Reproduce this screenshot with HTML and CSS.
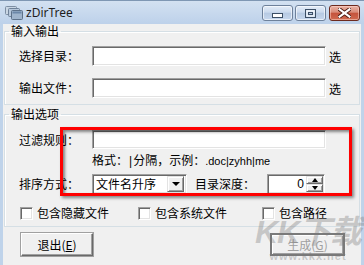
FILE: index.html
```html
<!DOCTYPE html>
<html>
<head>
<meta charset="utf-8">
<link rel="stylesheet" href="styles.css">
</head>
<body>
<div class="window">
  <div class="titlebar">
    <svg class="appicon" width="18" height="14" viewBox="0 0 18 14">
      <rect x="0.5" y="0.5" width="11" height="8" rx="1" fill="#c9d6e4" stroke="#7d8ea3"/>
      <rect x="3.5" y="2.5" width="11" height="8" rx="1" fill="#b7c8dc" stroke="#6f8299"/>
      <rect x="6.5" y="4.5" width="11" height="9" rx="1" fill="#9fb4cc" stroke="#5d7189"/>
      <rect x="7.5" y="5.5" width="9" height="2" fill="#6c87a8"/>
    </svg>
    <span class="title">zDirTree</span>
    <div class="controls">
      <div class="cbtn minb">
        <svg width="11" height="5" viewBox="0 0 11 5"><rect x="0.5" y="0.5" width="10" height="4" fill="#fff" stroke="#3c4f66"/></svg>
      </div>
      <div class="cbtn maxb">
        <svg width="11" height="9" viewBox="0 0 11 9"><rect x="0.5" y="0.5" width="10" height="8" fill="none" stroke="#3c4f66"/><rect x="2" y="2" width="7" height="5" fill="none" stroke="#fff" stroke-width="1"/><rect x="3.5" y="3.5" width="4" height="2" fill="none" stroke="#3c4f66"/></svg>
      </div>
      <div class="cbtn closeb">
        <svg width="13" height="10" viewBox="0 0 13 10"><path d="M1 1 L12 9 M12 1 L1 9" stroke="#4a1a12" stroke-width="4" stroke-linecap="square"/><path d="M1.5 1.3 L11.5 8.7 M11.5 1.3 L1.5 8.7" stroke="#fff" stroke-width="2.2" stroke-linecap="square"/></svg>
      </div>
    </div>
  </div>
  <div class="client">
    <fieldset class="group g1">
      <legend>输入输出</legend>
      <div class="gbody b1">
        <div class="row"><span class="label">选择目录：</span><div class="edit wide"></div><span class="pick">选</span></div>
        <div class="row"><span class="label">输出文件：</span><div class="edit wide"></div><span class="pick">选</span></div>
      </div>
    </fieldset>
    <fieldset class="group g2">
      <legend>输出选项</legend>
      <div class="gbody b2">
        <div class="row ra"><span class="label">过滤规则：</span><div class="edit wide short"></div></div>
        <div class="hint">格式：<span class="bar">|</span>分隔，示例：<span class="latin">.doc|zyhh|me</span></div>
        <div class="row rc">
          <span class="label">排序方式：</span>
          <div class="combo"><span class="ctext">文件名升序</span><div class="dropbtn"><span class="tri down"></span></div></div>
          <span class="label label2">目录深度：</span>
          <div class="spin"><span class="stext">0</span><div class="spinbtns"><div class="sbtn"><span class="tri up"></span></div><div class="sbtn"><span class="tri down"></span></div></div></div>
        </div>
        <div class="row checks">
          <label class="chk c1"><span class="box"></span>包含隐藏文件</label>
          <label class="chk c2"><span class="box"></span>包含系统文件</label>
          <label class="chk c3"><span class="box"></span>包含路径</label>
        </div>
      </div>
    </fieldset>
    <div class="buttons">
      <div class="btn exit">退出(<u>E</u>)</div>
      <div class="btn gen">生成(<u>G</u>)</div>
    </div>
  </div>
  <div class="annot"></div>
  <div class="watermark"><span class="wm1">KK下载</span><span class="wm2">www.kkx.net</span></div>
</div>
</body>
</html>
```
FILE: styles.css
```css
* { box-sizing: border-box; }
html, body { margin: 0; padding: 0; background: #bed3ec; }
body { font-family: "Noto Sans CJK SC", "Noto Sans", sans-serif; font-size: 12px; color: #000; }

.window {
  position: relative;
  width: 364px;
  height: 265px;
  overflow: hidden;
  background: #bfd3ea;
  display: flex;
  flex-direction: column;
}

.titlebar {
  height: 24px;
  flex: none;
  display: flex;
  align-items: center;
  background: linear-gradient(#d3e1f1, #bdd1ea);
  border-top: 1px solid #7f97b3;
  padding-left: 5px;
}
.appicon { display: block; margin-top: 0; }
.title {
  font-family: "Noto Sans", "DejaVu Sans", sans-serif;
  font-size: 12px;
  margin-left: 3px;
  line-height: 14px;
  color: #1e1e1e;
}
.controls {
  margin-left: auto;
  margin-right: 4px;
  display: flex;
  gap: 2px;
  align-self: flex-start;
  margin-top: 4px;
}
.cbtn {
  width: 31px;
  height: 16px;
  border-radius: 3px;
  border: 1px solid #6e819b;
  background: linear-gradient(#e4edf8 0%, #cbdaee 45%, #b6c9e2 50%, #c7d8ee 100%);
  display: flex;
  align-items: center;
  justify-content: center;
  box-shadow: inset 0 0 0 1px rgba(255,255,255,0.6);
}
.minb svg { margin-top: 5px; }
.maxb { margin-right: 1px; }
.closeb {
  border-color: #6d2a1e;
  background: linear-gradient(#eab3a6 0%, #d98b78 45%, #c4533c 50%, #d06a50 100%);
  box-shadow: inset 0 0 0 1px rgba(255,220,210,0.5);
}

.client {
  flex: 1;
  background: #f0f0f0;
  border-left: 3px solid #bfd3ea;
  border-right: 3px solid #bfd3ea;
  padding: 0 1px;
  display: flex;
  flex-direction: column;
}

.group {
  margin: 0;
  padding: 0;
  min-inline-size: 0;
  border: 1px solid #d5dfe5;
  box-shadow: inset 1px 1px #fff;
}
.group legend {
  margin-left: 4px;
  padding: 0 2px;
  line-height: 12px;
  font-size: 12px;
}
.g1 { margin-top: 1px; }
.g2 { margin-top: 3px; }

.gbody { padding-left: 14px; display: flex; flex-direction: column; }
.b1 { padding-top: 9px; padding-bottom: 6px; gap: 12px; }
.b2 { padding-top: 10px; padding-bottom: 6px; }

.row { display: flex; align-items: center; height: 20px; }
.label { width: 73px; flex: none; line-height: 14px; }
.edit {
  height: 20px;
  background: #fff;
  border: 1px solid;
  border-color: #a0a0a0 #fff #fff #a0a0a0;
  box-shadow: inset 1px 1px #696969, inset -1px -1px #e3e3e3;
}
.wide { width: 234px; flex: none; }
.short { height: 19px; }
.ra { height: 19px; }
.pick { margin-left: 3px; }

.hint {
  margin-top: 4px;
  line-height: 14px;
  height: 14px;
  margin-left: 73px;
  white-space: nowrap;
}
.hint .bar { font-family: "Liberation Sans", sans-serif; font-size: 12px; margin: 0 1px; }
.hint .latin { font-family: "Liberation Sans", sans-serif; font-size: 11px; }

.rc { margin-top: 7px; }
.combo {
  width: 95px;
  height: 20px;
  flex: none;
  background: #fff;
  border: 1px solid;
  border-color: #a0a0a0 #fff #fff #a0a0a0;
  box-shadow: inset 1px 1px #696969, inset -1px -1px #e3e3e3;
  display: flex;
  align-items: center;
  padding: 2px 2px 2px 3px;
}
.ctext { flex: 1; line-height: 14px; }
.dropbtn, .sbtn {
  background: #f0f0f0;
  border: 1px solid;
  border-color: #e3e3e3 #696969 #696969 #e3e3e3;
  box-shadow: inset 1px 1px #fff, inset -1px -1px #a0a0a0;
  display: flex;
  align-items: center;
  justify-content: center;
}
.dropbtn { width: 17px; height: 16px; }
.tri { width: 0; height: 0; border-left: 4px solid transparent; border-right: 4px solid transparent; }
.tri.down { border-top: 4px solid #000; }
.tri.up { border-bottom: 4px solid #000; }
.sbtn .tri { border-left-width: 3.5px; border-right-width: 3.5px; }

.label2 { margin-left: 8px; width: 72px; }
.spin {
  width: 58px;
  height: 20px;
  flex: none;
  margin-top: -1px;
  background: #fff;
  border: 1px solid;
  border-color: #a0a0a0 #fff #fff #a0a0a0;
  box-shadow: inset 1px 1px #696969, inset -1px -1px #e3e3e3;
  display: flex;
  align-items: center;
  padding: 2px 1px 2px 2px;
}
.stext { flex: 1; text-align: right; padding-right: 2px; font-family: "Liberation Sans", sans-serif; font-size: 12px; line-height: 14px; }
.spinbtns { display: flex; flex-direction: column; width: 17px; height: 16px; }
.sbtn { height: 8px; }

.checks { margin-top: 12px; height: 14px; }
.chk { display: flex; align-items: center; line-height: 14px; flex: none; }
.c1 { margin-left: 1px; width: 118px; }
.c2 { width: 124px; }
.box {
  width: 13px;
  height: 13px;
  background: #fff;
  border: 1px solid;
  border-color: #a0a0a0 #fff #fff #a0a0a0;
  box-shadow: inset 1px 1px #696969, inset -1px -1px #e3e3e3;
  margin-right: 4px;
  flex: none;
}

.buttons {
  margin-top: 6px;
  display: flex;
  justify-content: space-between;
  padding: 0 15px 0 17px;
}
.btn {
  height: 23px;
  display: flex;
  align-items: center;
  justify-content: center;
  background: #f0f0f0;
  border: 1px solid;
  border-color: #fff #696969 #696969 #fff;
  box-shadow: inset -1px -1px #a0a0a0, 0 0 0 1px #a0a0a0;
  line-height: 14px;
}
.btn u { text-decoration: underline; }
.exit { width: 72px; }
.gen {
  width: 75px;
  color: #a0a0a0;
  border: 2px solid #7a7a7a;
  box-shadow: inset 1px 1px #fff, inset -1px -1px #a0a0a0;
}

.annot {
  position: absolute;
  left: 60px;
  top: 127px;
  width: 292px;
  height: 69px;
  border: 3px solid #ff0000;
  box-shadow: 2px 2px 3px rgba(0,0,0,0.45), inset 2px 2px 3px rgba(0,0,0,0.45);
  pointer-events: none;
}

.watermark {
  position: absolute;
  left: 252px;
  top: 214px;
  width: 112px;
  display: flex;
  flex-direction: column;
  align-items: center;
  pointer-events: none;
}
.wm1 {
  font-family: "Liberation Sans", "Noto Sans CJK SC", sans-serif;
  font-weight: bold;
  font-style: italic;
  font-size: 32px;
  line-height: 36px;
  color: rgba(120,120,120,0.35);
  letter-spacing: -1px;
}
.wm2 {
  font-family: "Liberation Sans", sans-serif;
  font-weight: bold;
  font-size: 11px;
  line-height: 12px;
  color: rgba(120,120,120,0.35);
  letter-spacing: 1px;
}
```
